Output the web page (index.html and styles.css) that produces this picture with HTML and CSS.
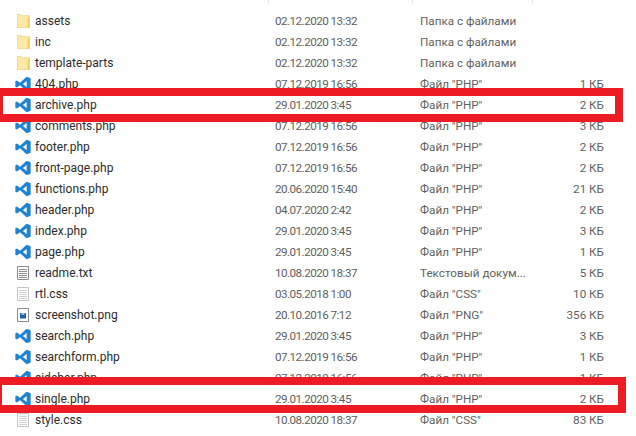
FILE: index.html
```html
<!DOCTYPE html>
<html lang="ru">
<head>
  <meta charset="UTF-8" />
  <title>Файлы темы</title>
  <link rel="stylesheet" href="styles.css">
</head>
<body>

<svg class="defs" width="0" height="0">
  <symbol id="folder" viewBox="0 0 16 16">
    <path d="M2 1h4l1.500 1.500H15V15H2z" fill="#fde9a6"/>
    <path d="M2 1h4l1.500 1.500H15V15H2zM2.500 1.500v13h12V3H7.300L5.800 1.500z" fill="#ecd07f" fill-rule="evenodd"/>
    <path d="M12.500 14.500V5l2-1.500v11z" fill="#f2cd68"/>
  </symbol>
  <symbol id="vscode" viewBox="0 0 24 24">
    <path fill-rule="evenodd" d="M17.500 1 7.500 10.300 3 6.800 0.500 8v8L3 17.200l4.500-3.500 10 9.300 6-2.500V3.500zM17.500 7.500 11.800 12l5.700 4.500z" fill="#1f84d0"/>
  </symbol>
  <symbol id="text" viewBox="0 0 16 16">
    <path d="M2.500 1.500h11v13h-11z" fill="#fff" stroke="#8a8a8a"/>
    <path d="M4 4.500h8M4 6.500h8M4 8.500h8M4 10.500h8M4 12.500h8" stroke="#8f8f8f"/>
  </symbol>
  <symbol id="css" viewBox="0 0 16 16">
    <path d="M2.500 1.500h11v13h-11z" fill="#fff" stroke="#c4c4c4"/>
    <path d="M4 4.500h8M4 6.500h8M4 8.500h8M4 10.500h8M4 12.500h8" stroke="#d2d2d2"/>
  </symbol>
  <symbol id="image" viewBox="0 0 16 16">
    <path d="M2.500 1.500h11v13h-11z" fill="#fff" stroke="#8a8a8a"/>
    <path d="M5 6h6v5.500H5z" fill="#1d5fa8"/>
    <path d="M6.500 6h3v2h-3z" fill="#8fc0ea"/>
  </symbol>
</svg>

<div class="columns">
  <span class="sep sep-date"></span>
  <span class="sep sep-type"></span>
  <span class="sep sep-size"></span>
</div>

<div id="list">
  <div class="row"><svg class="ico"><use href="#folder"/></svg><span class="name">assets</span><span class="info date">02.12.2020 13:32</span><span class="info">Папка с файлами</span><span class="info size"></span></div>
  <div class="row"><svg class="ico"><use href="#folder"/></svg><span class="name">inc</span><span class="info date">02.12.2020 13:32</span><span class="info">Папка с файлами</span><span class="info size"></span></div>
  <div class="row"><svg class="ico"><use href="#folder"/></svg><span class="name">template-parts</span><span class="info date">02.12.2020 13:32</span><span class="info">Папка с файлами</span><span class="info size"></span></div>
  <div class="row"><svg class="ico"><use href="#vscode"/></svg><span class="name">404.php</span><span class="info date">07.12.2019 16:56</span><span class="info">Файл "PHP"</span><span class="info size">1 КБ</span></div>
  <div class="row"><svg class="ico"><use href="#vscode"/></svg><span class="name">archive.php</span><span class="info date">29.01.2020 3:45</span><span class="info">Файл "PHP"</span><span class="info size">2 КБ</span></div>
  <div class="row"><svg class="ico"><use href="#vscode"/></svg><span class="name">comments.php</span><span class="info date">07.12.2019 16:56</span><span class="info">Файл "PHP"</span><span class="info size">3 КБ</span></div>
  <div class="row"><svg class="ico"><use href="#vscode"/></svg><span class="name">footer.php</span><span class="info date">07.12.2019 16:56</span><span class="info">Файл "PHP"</span><span class="info size">2 КБ</span></div>
  <div class="row"><svg class="ico"><use href="#vscode"/></svg><span class="name">front-page.php</span><span class="info date">07.12.2019 16:56</span><span class="info">Файл "PHP"</span><span class="info size">2 КБ</span></div>
  <div class="row"><svg class="ico"><use href="#vscode"/></svg><span class="name">functions.php</span><span class="info date">20.06.2020 15:40</span><span class="info">Файл "PHP"</span><span class="info size">21 КБ</span></div>
  <div class="row"><svg class="ico"><use href="#vscode"/></svg><span class="name">header.php</span><span class="info date">04.07.2020 2:42</span><span class="info">Файл "PHP"</span><span class="info size">2 КБ</span></div>
  <div class="row"><svg class="ico"><use href="#vscode"/></svg><span class="name">index.php</span><span class="info date">29.01.2020 3:45</span><span class="info">Файл "PHP"</span><span class="info size">3 КБ</span></div>
  <div class="row"><svg class="ico"><use href="#vscode"/></svg><span class="name">page.php</span><span class="info date">29.01.2020 3:45</span><span class="info">Файл "PHP"</span><span class="info size">1 КБ</span></div>
  <div class="row"><svg class="ico"><use href="#text"/></svg><span class="name">readme.txt</span><span class="info date">10.08.2020 18:37</span><span class="info">Текстовый докум...</span><span class="info size">5 КБ</span></div>
  <div class="row"><svg class="ico"><use href="#css"/></svg><span class="name">rtl.css</span><span class="info date">03.05.2018 1:00</span><span class="info">Файл "CSS"</span><span class="info size">10 КБ</span></div>
  <div class="row"><svg class="ico"><use href="#image"/></svg><span class="name">screenshot.png</span><span class="info date">20.10.2016 7:12</span><span class="info">Файл "PNG"</span><span class="info size">356 КБ</span></div>
  <div class="row"><svg class="ico"><use href="#vscode"/></svg><span class="name">search.php</span><span class="info date">29.01.2020 3:45</span><span class="info">Файл "PHP"</span><span class="info size">3 КБ</span></div>
  <div class="row"><svg class="ico"><use href="#vscode"/></svg><span class="name">searchform.php</span><span class="info date">07.12.2019 16:56</span><span class="info">Файл "PHP"</span><span class="info size">1 КБ</span></div>
  <div class="row"><svg class="ico"><use href="#vscode"/></svg><span class="name">sidebar.php</span><span class="info date">07.12.2019 16:56</span><span class="info">Файл "PHP"</span><span class="info size">1 КБ</span></div>
  <div class="row"><svg class="ico"><use href="#vscode"/></svg><span class="name">single.php</span><span class="info date">29.01.2020 3:45</span><span class="info">Файл "PHP"</span><span class="info size">2 КБ</span></div>
  <div class="row"><svg class="ico"><use href="#css"/></svg><span class="name">style.css</span><span class="info date">10.08.2020 18:37</span><span class="info">Файл "CSS"</span><span class="info size">83 КБ</span></div>
</div>

<!-- red frames drawn on top of the list -->
<div class="mark mark-archive"></div>
<div class="mark mark-single"></div>

</body>
</html>
```

FILE: styles.css
```css
html, body {
  margin: 0;
  height: 100%;
  overflow: hidden;
}

body {
  position: relative;
  background: #fff;
  font-family: Roboto, sans-serif;
  font-size: 12px;
  color: #5f5f5f;
}

.defs {
  position: absolute;
}

.columns {
  position: absolute;
  top: 0;
  left: 0;
}

.sep {
  position: absolute;
  top: 0;
  width: 1px;
  height: 3px;
  background: #e5e5e5;
}

.sep-date { left: 268px; }
.sep-type { left: 412px; }
.sep-size { left: 532px; }

#list {
  padding-top: 11px;
}

.row {
  display: grid;
  grid-template-columns: 15px 16px 244px 145px 100px 84px;
  align-items: center;
  height: 21px;
  line-height: 21px;
  white-space: nowrap;
}

.ico {
  grid-column: 2;
  width: 16px;
  height: 16px;
  margin-top: -2px;
}

.name {
  padding-left: 4px;
  color: #2b2b2b;
}

.info {
  font-size: 11.7px;
}

.date {
  letter-spacing: -0.55px;
}

.size {
  text-align: right;
}

.mark {
  position: absolute;
  box-sizing: border-box;
  left: -8px;
  border: 8px solid #ed1c24;
}

.mark-archive {
  top: 88px;
  width: 631px;
  height: 34px;
  border-left-width: 11px;
}

.mark-single {
  top: 377px;
  width: 634px;
  height: 36px;
  border-left-width: 10px;
}
```
